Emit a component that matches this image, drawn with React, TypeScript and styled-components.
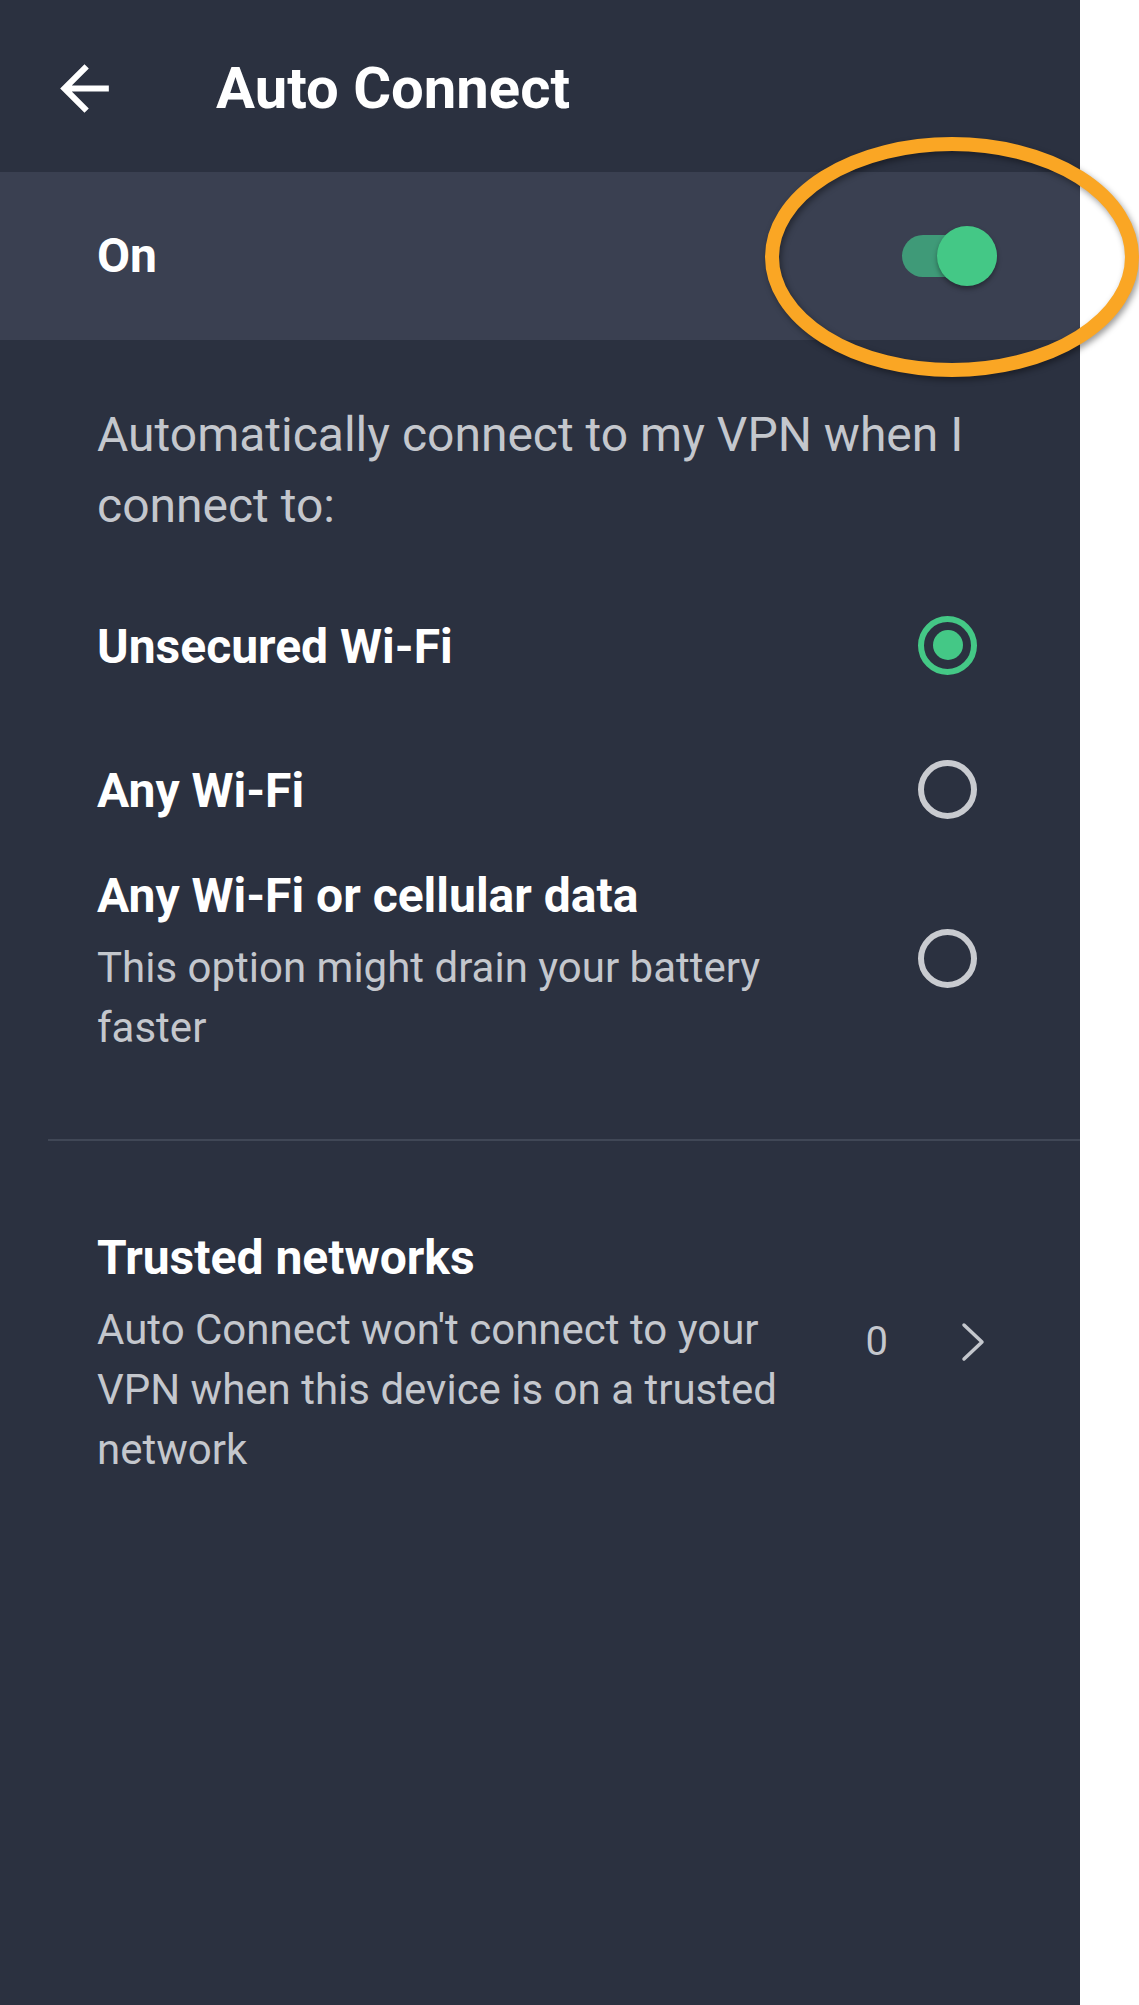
import { useState } from 'react'
import styled, { createGlobalStyle } from 'styled-components'

const GlobalStyle = createGlobalStyle`
	html, body {
		margin: 0;
		padding: 0;
		background: #ffffff;
		overflow-x: hidden;
	}
	* {
		box-sizing: border-box;
	}
`

const Screen = styled.div`
	width: 1080px;
	min-height: 2005px;
	background: #2b3140;
	font-family: Roboto, 'Noto Sans', sans-serif;
	color: #ffffff;
`

const Header = styled.header`
	height: 172px;
	display: flex;
	align-items: center;
	gap: 95px;
	padding: 4px 0 0 48px;
`

const BackButton = styled.button`
	width: 73px;
	height: 73px;
	padding: 0;
	border: none;
	background: none;
	display: flex;
	align-items: center;
	justify-content: center;
	cursor: pointer;
`

const Title = styled.h1`
	margin: 0;
	font-size: 58px;
	font-weight: 700;
	line-height: 72px;
	color: #ffffff;
`

const ToggleRow = styled.div`
	position: relative;
	height: 168px;
	background: #3a4051;
	display: flex;
	align-items: center;
	justify-content: space-between;
	padding: 0 83px 0 97px;
`

const RowLabel = styled.span`
	font-size: 48px;
	font-weight: 700;
	line-height: 56px;
	color: #ffffff;
`

const SwitchTrack = styled.button<{ $on: boolean }>`
	position: relative;
	width: 95px;
	height: 42px;
	padding: 0;
	border: none;
	border-radius: 21px;
	background: ${(p) => (p.$on ? '#3f9a78' : '#5b6070')};
	cursor: pointer;
`

const SwitchThumb = styled.span<{ $on: boolean }>`
	position: absolute;
	top: -9px;
	left: ${(p) => (p.$on ? '35px' : '0')};
	width: 60px;
	height: 60px;
	border-radius: 50%;
	background: ${(p) => (p.$on ? '#44c886' : '#d0d3d8')};
	box-shadow: 0 3px 5px rgba(0, 0, 0, 0.35);
`

const Highlight = styled.svg`
	position: absolute;
	left: 760px;
	top: -43px;
	width: 384px;
	height: 256px;
	overflow: visible;
	pointer-events: none;
	filter: drop-shadow(2px 3px 3px rgba(0, 0, 0, 0.4));
`

const Content = styled.section`
	padding: 0 103px 0 97px;
`

const Description = styled.p`
	margin: 59px 0 32px;
	font-size: 48px;
	line-height: 71px;
	font-weight: 400;
	color: #c4c7cd;
`

const OptionRow = styled.div<{ $tall?: boolean }>`
	display: flex;
	align-items: center;
	justify-content: space-between;
	min-height: 144px;
	padding: ${(p) => (p.$tall ? '3px 0 81px' : '0')};
	cursor: pointer;
`

const TextBlock = styled.div`
	width: 700px;
	display: flex;
	flex-direction: column;
	gap: 14px;
`

const OptionTitle = styled.span`
	font-size: 48px;
	font-weight: 700;
	line-height: 56px;
	padding-top: 4px;
	color: #ffffff;
`

const OptionHint = styled.span`
	font-size: 42px;
	font-weight: 400;
	line-height: 60px;
	color: #c4c7cd;
`

const Radio = styled.span<{ $checked: boolean; $lift?: boolean }>`
	flex: none;
	width: 59px;
	height: 59px;
	margin-bottom: ${(p) => (p.$lift ? '6px' : '0')};
	border-radius: 50%;
	border: 6px solid ${(p) => (p.$checked ? '#44c886' : '#c9cbd0')};
	display: flex;
	align-items: center;
	justify-content: center;

	&::after {
		content: '';
		width: 30px;
		height: 30px;
		border-radius: 50%;
		background: ${(p) => (p.$checked ? '#44c886' : 'transparent')};
	}
`

const Divider = styled.hr`
	margin: 0 0 0 48px;
	border: none;
	height: 2px;
	background: #404756;
`

const TrustedRow = styled.div`
	display: flex;
	align-items: center;
	justify-content: space-between;
	padding: 85px 94px 0 97px;
	cursor: pointer;
`

const TrustedMeta = styled.div`
	display: flex;
	align-items: center;
	gap: 72px;
	margin-bottom: 22px;
`

const Count = styled.span`
	font-size: 40px;
	line-height: 48px;
	color: #c4c7cd;
`

type Mode = 'unsecured' | 'any' | 'cellular'

const options: { id: Mode; title: string; hint?: string }[] = [
	{ id: 'unsecured', title: 'Unsecured Wi-Fi' },
	{ id: 'any', title: 'Any Wi-Fi' },
	{ id: 'cellular', title: 'Any Wi-Fi or cellular data', hint: 'This option might drain your battery faster' },
]

const App = () => {
	const [on, setOn] = useState(true)
	const [mode, setMode] = useState<Mode>('unsecured')

	return (
		<>
			<GlobalStyle />
			<Screen>
				<Header>
					<BackButton aria-label="Back">
						<svg width="73" height="73" viewBox="0 0 24 24" fill="#ffffff">
							<path d="M20 11H7.83l5.59-5.59L12 4l-8 8 8 8 1.41-1.41L7.83 13H20v-2z" />
						</svg>
					</BackButton>
					<Title>Auto Connect</Title>
				</Header>

				<ToggleRow>
					<RowLabel>{on ? 'On' : 'Off'}</RowLabel>
					<SwitchTrack $on={on} onClick={() => setOn(!on)} aria-label="Toggle auto connect">
						<SwitchThumb $on={on} />
					</SwitchTrack>
					<Highlight viewBox="0 0 384 256">
						<ellipse cx="192" cy="128" rx="180" ry="113" fill="none" stroke="#faa624" strokeWidth="14" />
					</Highlight>
				</ToggleRow>

				<Content>
					<Description>Automatically connect to my VPN when I connect to:</Description>
					{options.map((o) => (
						<OptionRow key={o.id} $tall={!!o.hint} onClick={() => setMode(o.id)}>
							<TextBlock>
								<OptionTitle>{o.title}</OptionTitle>
								{o.hint && <OptionHint>{o.hint}</OptionHint>}
							</TextBlock>
							<Radio $checked={mode === o.id} $lift={!!o.hint} />
						</OptionRow>
					))}
				</Content>

				<Divider />

				<TrustedRow>
					<TextBlock>
						<OptionTitle>Trusted networks</OptionTitle>
						<OptionHint>Auto Connect won't connect to your VPN when this device is on a trusted network</OptionHint>
					</TextBlock>
					<TrustedMeta>
						<Count>0</Count>
						<svg width="26" height="40" viewBox="0 0 26 40" fill="none">
							<path d="M4 3l18 17L4 37" stroke="#c4c7cd" strokeWidth="3.5" strokeLinecap="round" strokeLinejoin="round" />
						</svg>
					</TrustedMeta>
				</TrustedRow>
			</Screen>
		</>
	)
}

export default App
